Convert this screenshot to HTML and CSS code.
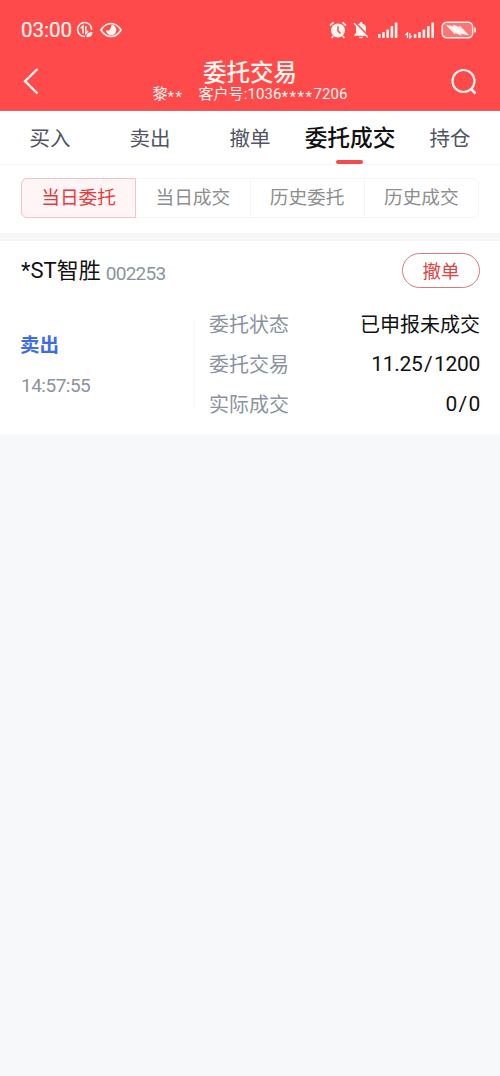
FILE: index.html
```html
<!DOCTYPE html>
<html lang="zh-CN">
<head>
    <meta charset="UTF-8">
    <meta name="viewport" content="width=device-width, initial-scale=1.0">
    <title>委托交易</title>
    <link rel="stylesheet" href="styles.css">
</head>
<body>
    <header class="header">
        <div class="status-bar">
            <div class="status-left">
                <span class="clock">03:00</span>
                <svg class="icon-data" width="18" height="18" viewBox="0 0 18 18" fill="none" stroke="currentColor" stroke-width="1.6">
                    <path d="M9 15.500A7 7 0 1 1 15.600 9"/>
                    <path d="M4.800 7.300L7 5v7.500M9.800 5v7.300L12 10" stroke-width="1.500"/>
                    <path d="M10.500 16c-.5-3.500 2-5 6-5 0 3.500-2.500 6-6 5z" fill="currentColor" stroke="none"/>
                </svg>
                <svg class="icon-eye" width="22" height="16" viewBox="0 0 22 16">
                    <path d="M1 8Q5 1.500 11 1.500T21 8Q17 14.500 11 14.500T1 8z" fill="none" stroke="currentColor" stroke-width="1.700"/>
                    <path d="M11.500 2.800a5.200 5.200 0 1 1-5.500 5.500q2.500 1 4-.8t1.500-4.700z" fill="currentColor"/>
                </svg>
            </div>
            <div class="status-right">
                <svg width="18" height="18" viewBox="0 0 18 18" fill="none" stroke="currentColor">
                    <circle cx="9" cy="9.500" r="7" fill="currentColor" stroke="none"/>
                    <path d="M1 4.500L4.500 1.300M17 4.500L13.500 1.300M4.200 15L2.700 17M13.800 15l1.500 2" stroke-width="1.700"/>
                    <path d="M9 5.300v4.700l2.500 2.500" stroke="#ff4a4b" stroke-width="1.500"/>
                </svg>
                <svg class="icon-bell" width="16" height="18" viewBox="0 0 16 18">
                    <path d="M8 1a1.300 1.300 0 0 1 1.300 1.400C12 3 13 5 13 7.500V12l1.800 2v.8H1.200V14L3 12V7.500C3 5 4 3 6.700 2.400A1.300 1.300 0 0 1 8 1z" fill="currentColor"/>
                    <path d="M6 15.700h4a2 1.600 0 0 1-4 0z" fill="currentColor"/>
                    <path d="M2.500 1.800L15.500 15" stroke="#ff4a4b" stroke-width="1.600"/>
                    <path d="M1 2.300L14.800 16.300" stroke="currentColor" stroke-width="1.500"/>
                </svg>
                <svg class="icon-signal" width="22" height="18" viewBox="0 0 22 18" fill="currentColor">
                    <rect x="1" y="13" width="2.600" height="4" rx=".7"/>
                    <rect x="5.200" y="11" width="2.600" height="6" rx=".7"/>
                    <rect x="9.400" y="8.500" width="2.600" height="8.500" rx=".7"/>
                    <rect x="13.600" y="5" width="2.600" height="12" rx=".7"/>
                    <rect x="17.800" y="1.500" width="2.600" height="15.500" rx=".7"/>
                </svg>
                <svg class="icon-signal-two" width="30" height="18" viewBox="0 0 30 18" fill="currentColor">
                    <path d="M.5 14L2.500 12v5M4.800 12v5L6.800 15" fill="none" stroke="currentColor" stroke-width="1.300"/>
                    <rect x="8.800" y="13" width="2.600" height="4" rx=".7"/>
                    <rect x="13.200" y="11" width="2.600" height="6" rx=".7"/>
                    <rect x="17.600" y="8.500" width="2.600" height="8.500" rx=".7"/>
                    <rect x="22" y="5" width="2.600" height="12" rx=".7"/>
                    <rect x="26.400" y="1.500" width="2.600" height="15.500" rx=".7"/>
                </svg>
                <svg class="icon-battery" width="36" height="18" viewBox="0 0 36 18">
                    <rect x="1.200" y="1.200" width="30.500" height="15.600" rx="4.500" fill="#ff7474" stroke="currentColor" stroke-width="1.500"/>
                    <path d="M5.500 4.200l7.500 1.500-.5-1.700 6.500 2.500-.3-1.700L27.500 14l-8-1.500.5 1.800-6.500-2.800.3 1.700z" fill="currentColor" stroke="currentColor" stroke-width=".5"/>
                    <path d="M33.300 6.500h.7a1 1 0 0 1 1 1v3a1 1 0 0 1-1 1h-.7z" fill="currentColor"/>
                </svg>
            </div>
        </div>
        <div class="nav-bar">
            <svg class="icon-back" width="16" height="28" viewBox="0 0 16 28" fill="none" stroke="currentColor" stroke-width="2.400">
                <path d="M14.500 2L2 14.200 14.500 26.500"/>
            </svg>
            <div class="nav-title">
                <h1>委托交易</h1>
                <p><span>黎<span class="stars">**</span></span><span class="account">客户号:1036<span class="stars">****</span>7206</span></p>
            </div>
            <svg class="icon-search" width="28" height="28" viewBox="0 0 28 28" fill="none" stroke="currentColor" stroke-width="2.200">
                <circle cx="13.500" cy="13" r="11"/>
                <path d="M20.500 20.500l5 5" stroke-width="2.600"/>
            </svg>
        </div>
    </header>

    <nav class="tabs">
        <a class="tab">买入</a>
        <a class="tab">卖出</a>
        <a class="tab">撤单</a>
        <a class="tab active">委托成交</a>
        <a class="tab">持仓</a>
    </nav>

    <div class="filter">
        <div class="segments">
            <a class="segment active">当日委托</a>
            <a class="segment">当日成交</a>
            <a class="segment">历史委托</a>
            <a class="segment">历史成交</a>
        </div>
    </div>

    <section class="order">
        <div class="order-head">
            <span class="stock-name">*ST智胜</span>
            <span class="stock-code">002253</span>
            <button class="cancel-btn">撤单</button>
        </div>
        <div class="order-body">
            <div class="order-side">
                <p class="side">卖出</p>
                <p class="time">14:57:55</p>
            </div>
            <dl class="order-info">
                <div class="row"><dt>委托状态</dt><dd>已申报未成交</dd></div>
                <div class="row"><dt>委托交易</dt><dd class="num">11.25<span class="slash">/</span>1200</dd></div>
                <div class="row"><dt>实际成交</dt><dd class="num">0<span class="slash">/</span>0</dd></div>
            </dl>
        </div>
    </section>
</body>
</html>
```
FILE: styles.css
```css
* {
    box-sizing: border-box;
    margin: 0;
    padding: 0;
}

body {
    font-family: 'Roboto', 'Noto Sans CJK SC', sans-serif;
    background: #f7f8fa;
    color: #111;
    min-height: 100vh;
}

svg {
    display: block;
    flex-shrink: 0;
}

/* Header */
.header {
    height: 111px;
    background: #ff4a4b;
    color: #fff5ee;
    border-bottom: 1px solid #e0605f;
}

.status-bar {
    display: flex;
    justify-content: space-between;
    height: 60px;
    padding: 0 23px 0 21px;
}

.status-left,
.status-right {
    display: flex;
    align-items: center;
}

.clock {
    font-size: 20.5px;
    font-weight: 400;
    line-height: 61px;
    -webkit-text-stroke: 0.2px;
}

.icon-data {
    margin-left: 4px;
}

.icon-eye {
    margin-left: 6px;
}

.icon-bell {
    margin-left: 6px;
}

.icon-signal {
    margin-left: 8px;
}

.icon-signal-two {
    margin-left: 6px;
}

.icon-battery {
    margin-left: 6px;
}

.nav-bar {
    display: flex;
    justify-content: space-between;
    padding: 0 22px 0 23px;
}

.icon-back {
    margin-top: 7px;
}

.icon-search {
    margin-top: 8px;
}

.nav-title {
    padding: 1px 0 0 11px;
    text-align: center;
}

.nav-title h1 {
    font-size: 23.5px;
    font-weight: 500;
    line-height: 25px;
}

.nav-title p {
    display: flex;
    gap: 15px;
    font-size: 15px;
    line-height: 16px;
}

.account {
    letter-spacing: 0.1px;
}

.stars {
    letter-spacing: 1.5px;
    position: relative;
    top: 3px;
}

/* Tabs */
.tabs {
    display: grid;
    grid-template-columns: repeat(5, 1fr);
    height: 54px;
    background: #fff;
    border-bottom: 1px solid #f5f5f6;
}

.tab {
    position: relative;
    height: 53px;
    font-size: 20.5px;
    line-height: 56px;
    color: #50555f;
    text-align: center;
    white-space: nowrap;
}

.tab.active {
    font-size: 22.7px;
    font-weight: 500;
    color: #111;
}

.tab.active::after {
    content: '';
    position: absolute;
    left: 50%;
    bottom: 0;
    width: 27px;
    height: 4px;
    margin-left: -14px;
    border-radius: 2px;
    background: #f24c4c;
}

/* Filter */
.filter {
    height: 76px;
    padding: 13px 21px 0;
    background: #fff;
    border-bottom: 8px solid #f7f7f8;
}

.segments {
    display: flex;
    height: 40px;
    border: 1px solid #f5f5f6;
    border-radius: 6px;
}

.segment {
    flex: 1;
    font-size: 18.7px;
    line-height: 39px;
    color: #8e8e8e;
    text-align: center;
    border-right: 1px solid #f5f5f6;
}

.segment:last-child {
    border-right: none;
}

.segment.active {
    margin: -1px 0 -1px -1px;
    color: #e43c3a;
    background: #fff5f6;
    border: 1px solid #f0c4c8;
    border-radius: 6px 0 0 6px;
}

/* Order card */
.order {
    height: 193px;
    padding: 12px 20px 0 21px;
    background: #fff;
}

.order-head {
    display: flex;
    height: 35px;
}

.stock-name {
    font-size: 22px;
    line-height: 36px;
}

.stock-code {
    margin-left: 5px;
    font-size: 19px;
    line-height: 42px;
    letter-spacing: -0.7px;
    color: #8c93a0;
}

.cancel-btn {
    width: 78px;
    height: 35px;
    margin-left: auto;
    padding-bottom: 1px;
    font-family: inherit;
    font-size: 18.5px;
    color: #e0443f;
    background: #fff;
    border: 1px solid #d9797c;
    border-radius: 18px;
}

.order-body {
    display: flex;
    padding-top: 17px;
}

.order-side {
    width: 174px;
    height: 88px;
    margin-top: 15px;
    border-right: 1px solid #f7f7f9;
}

.side {
    margin: 6px 0 0 -1px;
    font-size: 19.5px;
    font-weight: 700;
    line-height: 40px;
    color: #3d6ce8;
}

.time {
    font-size: 19px;
    line-height: 40px;
    letter-spacing: -0.5px;
    color: #8c93a0;
}

.order-info {
    flex: 1;
    padding-left: 14px;
}

.row {
    display: flex;
    justify-content: space-between;
    font-size: 20px;
    line-height: 40px;
}

.row dt {
    color: #8c93a0;
}

.row .num {
    font-size: 21px;
    line-height: 39px;
    letter-spacing: -0.3px;
}

.slash {
    margin: 0 1.5px;
}
```
